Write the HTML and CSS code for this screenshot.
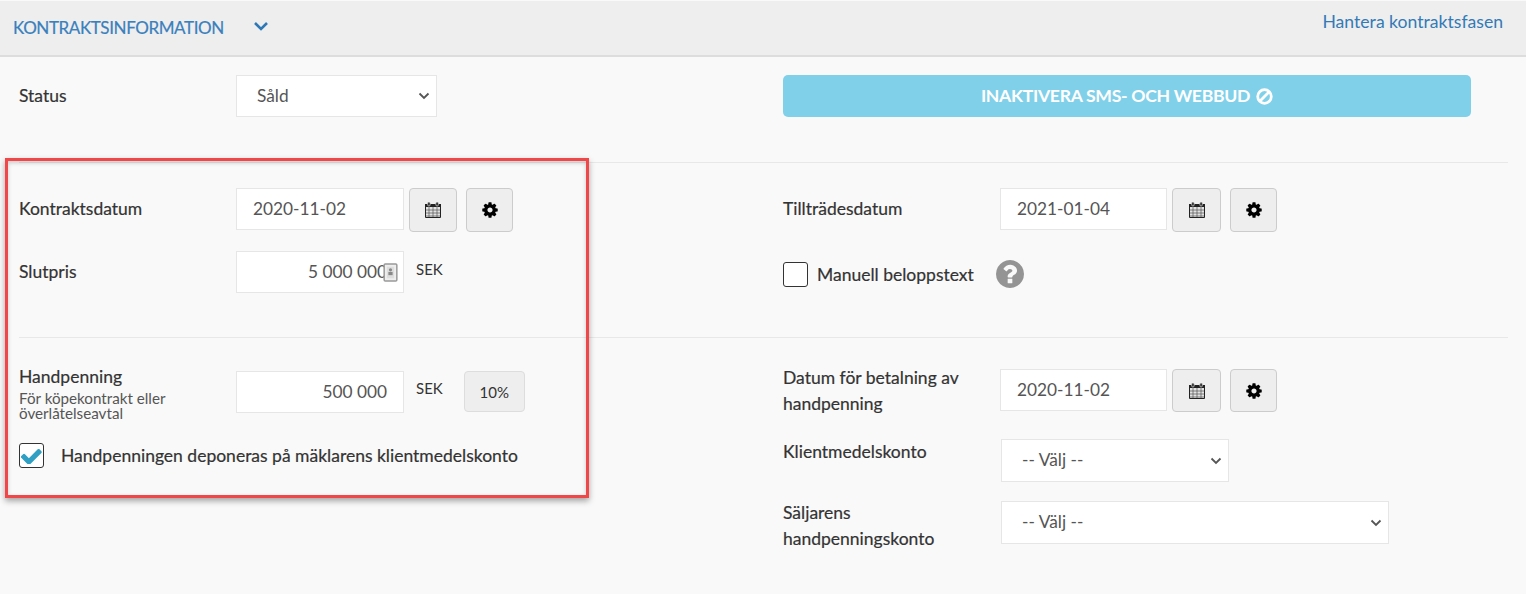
FILE: index.html
```html
<!DOCTYPE html>
<html lang="sv">
<head>
<meta charset="utf-8">
<title>Kontraktsinformation</title>
<link rel="stylesheet" href="styles.css">
</head>
<body>
<header class="topbar">
  <div class="topbar-left">
    <span class="topbar-title">KONTRAKTSINFORMATION</span>
    <svg class="chevron" viewBox="0 0 16 10"><polyline points="2,2 8,8 14,2"/></svg>
  </div>
  <a class="topbar-link">Hantera kontraktsfasen</a>
</header>

<section class="section section-status">
  <div class="col">
    <div class="row">
      <span class="label">Status</span>
      <select class="field select-status"><option>Såld</option></select>
    </div>
  </div>
  <div class="col">
    <button class="sms-button">INAKTIVERA SMS- OCH WEBBUD
      <svg class="ban" viewBox="0 0 16 16"><circle cx="8" cy="8" r="6.4"/><line x1="3.8" y1="12.2" x2="12.2" y2="3.8"/></svg>
    </button>
  </div>
</section>

<section class="section section-dates">
  <div class="col">
    <div class="row row-date">
      <span class="label">Kontraktsdatum</span>
      <input class="field date" value="2020-11-02">
      <button class="icon-btn"><svg class="cal" viewBox="0 0 18 18"><use href="#calendar"/></svg></button>
      <button class="icon-btn gear-btn"><svg class="cog" viewBox="0 0 1792 1792"><use href="#cog"/></svg></button>
    </div>
    <div class="row row-price">
      <span class="label">Slutpris</span>
      <div class="input-wrap">
        <input class="field amount" value="5 000 000">
        <svg class="wallet" viewBox="0 0 14 18"><rect x="1" y="1" width="12" height="16" rx="1"/><rect x="3.5" y="3.5" width="7" height="11" class="wallet-in"/><circle cx="7" cy="6.5" r="1.5" class="wallet-dot"/><rect x="5" y="8.5" width="4" height="3" class="wallet-dot"/></svg>
      </div>
      <span class="unit">SEK</span>
    </div>
  </div>
  <div class="col">
    <div class="row row-date">
      <span class="label">Tillträdesdatum</span>
      <input class="field date date-right" value="2021-01-04">
      <button class="icon-btn icon-btn-right"><svg class="cal" viewBox="0 0 18 18"><use href="#calendar"/></svg></button>
      <button class="icon-btn gear-btn"><svg class="cog" viewBox="0 0 1792 1792"><use href="#cog"/></svg></button>
    </div>
    <div class="row row-manual">
      <span class="checkbox"></span>
      <span class="label-inline">Manuell beloppstext</span>
      <svg class="help" viewBox="128 128 1536 1536"><path d="M1024 1376v-192q0-14-9-23t-23-9h-192q-14 0-23 9t-9 23v192q0 14 9 23t23 9h192q14 0 23-9t9-23zm256-672q0-88-55.5-163t-138.5-116-170-41q-243 0-371 213-15 24 8 42l132 100q7 6 19 6 16 0 25-12 53-68 86-92 34-24 86-24 48 0 85.5 26t37.5 59q0 38-20 61t-68 45q-63 28-115.5 86.5t-52.5 125.5v36q0 14 9 23t23 9h192q14 0 23-9t9-23q0-19 21.5-49.5t54.5-49.5q32-18 49-28.5t46-35 44.5-48 28-60.5 12.5-81zm384 192q0 209-103 385.5t-279.5 279.5-385.5 103-385.5-103-279.5-279.5-103-385.5 103-385.5 279.5-279.5 385.5-103 385.5 103 279.5 279.5 103 385.5z"/></svg>
    </div>
  </div>
</section>

<section class="section section-deposit">
  <div class="col">
    <div class="row row-deposit">
      <div class="label-stack">
        <span class="label">Handpenning</span>
        <span class="sublabel">För köpekontrakt eller överlåtelseavtal</span>
      </div>
      <input class="field amount" value="500 000">
      <span class="unit unit-deposit">SEK</span>
      <button class="pct-btn">10%</button>
    </div>
    <div class="row row-check">
      <span class="checkbox checkbox-wide">
        <svg class="check" viewBox="128 300 1560 1120"><path d="M1671 566q0 40-28 68l-724 724-136 136q-28 28-68 28t-68-28l-136-136-362-362q-28-28-28-68t28-68l136-136q28-28 68-28t68 28l294 295 656-657q28-28 68-28t68 28l136 136q28 28 28 68z"/></svg>
      </span>
      <span class="label-inline">Handpenningen deponeras på mäklarens klientmedelskonto</span>
    </div>
  </div>
  <div class="col">
    <div class="row row-pay">
      <span class="label label-tall">Datum för betalning av handpenning</span>
      <input class="field date date-right" value="2020-11-02">
      <button class="icon-btn icon-btn-right icon-btn-short"><svg class="cal" viewBox="0 0 18 18"><use href="#calendar"/></svg></button>
      <button class="icon-btn gear-btn icon-btn-short"><svg class="cog" viewBox="0 0 1792 1792"><use href="#cog"/></svg></button>
    </div>
    <div class="row row-client">
      <span class="label label-tall">Klientmedelskonto</span>
      <select class="field select-client"><option>-- Välj --</option></select>
    </div>
    <div class="row row-seller">
      <span class="label label-tall">Säljarens handpenningskonto</span>
      <select class="field select-seller"><option>-- Välj --</option></select>
    </div>
  </div>
</section>

<div class="highlight"></div>

<svg class="defs" width="0" height="0">
  <defs>
    <g id="calendar">
      <path class="cal-body" d="M1.5 3.5h15v13h-15z"/>
      <path class="cal-band" d="M1 3h16v3H1z"/>
      <rect class="cal-ring" x="3.6" y="1" width="2.6" height="4" rx="1.2"/>
      <rect class="cal-ring" x="11.8" y="1" width="2.6" height="4" rx="1.2"/>
      <path class="cal-grid" d="M2 9h14M2 12h14M2 15h14M5 6v10M9 6v10M13 6v10"/>
    </g>
    <path id="cog" d="M1152 896q0-106-75-181t-181-75-181 75-75 181 75 181 181 75 181-75 75-181zm512-109v222q0 12-8 23t-20 13l-185 28q-19 54-39 91 35 50 107 138 10 12 10 25t-9 23q-27 37-99 108t-94 71q-12 0-26-9l-138-108q-44 23-91 38-16 136-29 186-7 28-36 28h-222q-14 0-24.5-8.5t-11.5-21.5l-28-184q-49-16-90-37l-141 107q-10 9-25 9-14 0-25-11-126-114-165-168-7-10-7-23 0-12 8-23 15-21 51-66.5t54-70.5q-27-50-41-99l-183-27q-13-2-21-12.5t-8-23.5v-222q0-12 8-23t19-13l186-28q14-46 39-92-40-57-107-138-10-12-10-24 0-10 9-23 26-36 98.5-107.5t94.5-71.5q13 0 26 10l138 107q44-23 91-38 16-136 29-186 7-28 36-28h222q14 0 24.5 8.5t11.5 21.5l28 184q49 16 90 37l142-107q9-9 24-9 13 0 25 10 129 119 165 170 7 8 7 22 0 12-8 23-15 21-51 66.5t-54 70.5q26 50 41 98l183 28q13 2 21 12.5t8 23.5z"/>
  </defs>
</svg>
</body>
</html>
```

FILE: styles.css
```css
* { box-sizing: border-box; }

html, body { margin: 0; height: 594px; overflow: hidden; }

body {
  background: #f9f9f9;
  color: #333;
  font-family: Lato, "Liberation Sans", sans-serif;
  font-size: 17.5px;
  position: relative;
}

.topbar {
  height: 56px;
  margin-top: 1px;
  margin-bottom: -1px;
  background: #eee;
  border-bottom: 2px solid #ddd;
  display: flex;
  justify-content: space-between;
  padding: 0 23px 0 13px;
}
.topbar-left { display: flex; align-items: flex-start; padding-top: 17px; }
.topbar-title { font-size: 17px; color: #3a80bd; line-height: 20px; letter-spacing: -0.4px; -webkit-text-stroke: 0.2px #3a80bd; }
.chevron { width: 16px; height: 10px; margin: 3px 0 0 29px; fill: none; stroke: #2f78b6; stroke-width: 2.6; }
.topbar-link { font-size: 17.6px; line-height: 20px; color: #337ab7; padding-top: 11px; }

.section { display: grid; grid-template-columns: 764px 725px; margin: 0 18px 0 19px; }
.section-status { height: 106px; padding-top: 19px; }
.section-dates { height: 175px; padding-top: 25px; border-top: 1px solid #e8e8e8; }
.section-deposit { padding-top: 31px; border-top: 1px solid #e8e8e8; }

.col { display: flex; flex-direction: column; }
.row { display: flex; align-items: center; }

.label { width: 217px; flex: none; font-size: 17.5px; line-height: 26px; color: #333; -webkit-text-stroke: 0.2px #333; }
.label-inline { font-size: 17.5px; color: #333; -webkit-text-stroke: 0.2px #333; }
.label-stack { width: 217px; flex: none; display: flex; flex-direction: column; margin-top: -2px; }
.label-stack .label { line-height: 20px; }
.sublabel { font-size: 15.2px; line-height: 15px; color: #555; width: 165px; margin-top: 4px; }
.label-tall { padding-right: 20px; }

.field {
  height: 42px;
  border: 1px solid #e6e6e6;
  background: #fff;
  color: #555;
  font-family: inherit;
  font-size: 17.3px;
  border-radius: 0;
  outline: none;
}
input.field { padding-bottom: 2px; }
.date { width: 168px; padding: 0 16px; }
.date-right { width: 167px; }
.amount { width: 168px; padding: 0 16px; text-align: right; }
select.field {
  appearance: none;
  padding: 0 30px 2px 20px;
  background: #fff url("data:image/svg+xml,%3Csvg xmlns='http://www.w3.org/2000/svg' width='12' height='8'%3E%3Cpolyline points='1.5,1.5 6,6 10.5,1.5' fill='none' stroke='%23555' stroke-width='1.8'/%3E%3C/svg%3E") no-repeat right 6px center;
}
.select-status { width: 201px; }
.select-client { width: 228px; height: 43px; margin-left: 1px; }
.select-seller { width: 388px; height: 43px; margin: 1px 0 0 1px; }

.icon-btn {
  width: 48px;
  height: 44px;
  margin-left: 5px;
  background: #eee;
  border: 1px solid #ccc;
  border-radius: 4px;
  padding: 0;
  display: flex;
  align-items: center;
  justify-content: center;
}
.icon-btn-right { width: 49px; }
.icon-btn-short { height: 43px; }
.gear-btn { width: 47px; margin-left: 9px; }
.row-date { align-items: flex-start; }
.row-date .label { align-self: center; padding-bottom: 2px; }
.cal { width: 18px; height: 18px; }
.cog { width: 18px; height: 18px; fill: #000; }
.cal-body { fill: #e2e2e2; stroke: #222; stroke-width: 1; }
.cal-band { fill: #222; }
.cal-ring { fill: #333; stroke: #eee; stroke-width: 0.6; }
.cal-grid { fill: none; stroke: #555; stroke-width: 0.7; }

.sms-button {
  width: 688px;
  height: 42px;
  border: 0;
  border-radius: 5px;
  background: #81d0ea;
  color: #fff;
  font-family: inherit;
  font-size: 17.6px;
  font-weight: 700;
  letter-spacing: -0.3px;
  display: flex;
  align-items: center;
  justify-content: center;
  gap: 6px;
  padding: 0 0 2px;
}
.ban { width: 17px; height: 17px; fill: none; stroke: #fff; stroke-width: 2.6; margin-top: 2px; }

.row-price { margin-top: 19px; }
.input-wrap { position: relative; display: flex; }
.wallet { position: absolute; right: 6px; top: 12px; width: 15px; height: 19px; }
.wallet rect:first-child { fill: #eee; stroke: #999; stroke-width: 1.4; }
.wallet-in { fill: #ddd; }
.wallet-dot { fill: #888; }
.unit { font-size: 15px; margin: -6px 0 0 12px; color: #333; }

.row-manual { margin-top: 28px; height: 28px; }
.checkbox {
  width: 25px;
  height: 25px;
  flex: none;
  border: 1px solid #333;
  border-radius: 3px;
  background: #fff;
  display: flex;
  align-items: center;
  justify-content: center;
}
.row-manual .label-inline { margin-left: 9px; }
.help { width: 28px; height: 28px; margin-left: 22px; fill: #949494; }

.row-deposit { height: 42px; align-items: flex-start; }
.row-deposit .field { margin-top: 2px; }
.row-deposit .unit { margin-top: 10px; }
.pct-btn {
  width: 61px;
  height: 41px;
  margin: 2px 0 0 21px;
  background: #eee;
  border: 1px solid #ddd;
  border-radius: 4px;
  font-family: inherit;
  font-size: 15px;
  color: #333;
}
.row-check { margin-top: 32px; }
.checkbox-wide + .label-inline { margin-left: 17px; }
.check { width: 21px; height: 16px; fill: #2f9fc4; }

.row-pay { height: 43px; align-items: flex-start; }
.row-pay .label { margin-top: -4px; }
.row-client { margin-top: 27px; }
.row-client .label { align-self: flex-start; }
.row-seller { margin-top: 18px; align-items: flex-start; }
.row-seller .label { line-height: 25.5px; }

.highlight {
  position: absolute;
  left: 5px;
  top: 158px;
  width: 584px;
  height: 340px;
  border: 3px solid #f04848;
  box-shadow: 0 3px 6px rgba(0, 0, 0, 0.35), inset 0 2px 4px rgba(0, 0, 0, 0.18);
  pointer-events: none;
}

.defs { position: absolute; }
```
